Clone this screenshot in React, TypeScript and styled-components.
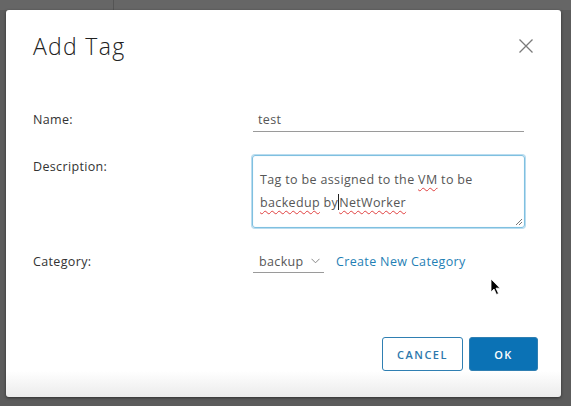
import styled, { createGlobalStyle } from "styled-components";

const GlobalStyle = createGlobalStyle`
  html, body {
    margin: 0;
    padding: 0;
    background: #5e5e5e;
  }
  body {
    font-family: "Open Sans", "Noto Sans", "Liberation Sans", sans-serif;
  }
`;

const Backdrop = styled.div`
  position: relative;
  width: 571px;
  height: 406px;
  overflow: hidden;
  background: #5c5c5c;
  display: flex;
  flex-direction: column;
`;

const BehindStrip = styled.div`
  height: 10px;
  flex: none;
  background: #666666;
  display: flex;
`;

const BehindCell = styled.div<{ $width: number }>`
  width: ${({ $width }) => $width}px;
  border-right: 1px solid #555;
`;

const Dialog = styled.div`
  margin-left: 6px;
  width: 555px;
  height: 387px;
  border-radius: 3px;
  background: linear-gradient(to bottom, #ffffff calc(100% - 26px), #ebebeb 100%);
  box-shadow: 0 1px 3px rgba(0, 0, 0, 0.5);
  display: flex;
  flex-direction: column;
  position: relative;
`;

const Header = styled.div`
  display: flex;
  align-items: center;
  justify-content: space-between;
  padding: 22px 27px 0 27px;
  height: 28px;
`;

const Title = styled.h2`
  margin: 0;
  font-size: 23px;
  font-weight: 300;
  color: #222;
  letter-spacing: 1.3px;
`;

const CloseButton = styled.button`
  all: unset;
  width: 16px;
  height: 16px;
  display: flex;
  cursor: pointer;
`;

const Form = styled.div`
  display: grid;
  grid-template-columns: 220px 1fr;
  padding: 0 37px 0 27px;
  margin-top: 48px;
  letter-spacing: 0.35px;
`;

const Label = styled.div<{ $top?: number }>`
  font-size: 12.5px;
  color: #333;
  padding-top: ${({ $top }) => $top ?? 0}px;
  line-height: 24px;
`;

const Field = styled.div<{ $top?: number }>`
  margin-top: ${({ $top }) => $top ?? 0}px;
`;

const TextInput = styled.div`
  height: 23px;
  border-bottom: 1px solid #9a9a9a;
  font-size: 12.5px;
  line-height: 24px;
  color: #565656;
  padding-left: 5px;
`;

const TextArea = styled.div`
  position: relative;
  box-sizing: border-box;
  height: 73px;
  margin-left: -1px;
  margin-right: -1px;
  border: 1px solid #7fc0e0;
  border-radius: 3px;
  box-shadow: 0 0 0 1px #b9dcef, inset 0 0 1px #b9dcef;
  padding: 12px 7px 0 7px;
  font-size: 12.5px;
  line-height: 23px;
  color: #565656;
`;

const Misspelled = styled.span`
  text-decoration: underline wavy #e04040;
  text-decoration-thickness: 1px;
  text-underline-offset: 3px;
`;

const Caret = styled.span`
  display: inline-block;
  width: 0;
  height: 16px;
  border-left: 1px solid #222;
  vertical-align: -3px;
`;

const ResizeGrip = styled.svg`
  position: absolute;
  right: 1px;
  bottom: 1px;
`;

const CategoryRow = styled.div`
  display: flex;
  align-items: center;
  gap: 12px;
`;

const Select = styled.div`
  box-sizing: border-box;
  width: 71px;
  height: 23px;
  border-bottom: 1px solid #9a9a9a;
  display: flex;
  align-items: center;
  justify-content: space-between;
  padding: 0 4px 0 6px;
  font-size: 12.5px;
  color: #565656;
`;

const Link = styled.a`
  font-size: 12.5px;
  color: #1f7fb5;
  text-decoration: none;
  cursor: pointer;
`;

const Footer = styled.div`
  margin-top: auto;
  display: flex;
  justify-content: flex-end;
  gap: 6px;
  padding: 0 23px 26px 0;
`;

const Button = styled.button<{ $primary?: boolean }>`
  all: unset;
  box-sizing: border-box;
  height: 34px;
  width: ${({ $primary }) => ($primary ? 69 : 81)}px;
  border-radius: 3px;
  border: 1px solid #2f7fb2;
  background: ${({ $primary }) => ($primary ? "#0b72b5" : "#ffffff")};
  color: ${({ $primary }) => ($primary ? "#ffffff" : "#2c78ac")};
  font-size: 11px;
  font-weight: 600;
  letter-spacing: 1.5px;
  display: flex;
  align-items: center;
  justify-content: center;
  cursor: pointer;
`;

const Pointer = styled.svg`
  position: absolute;
  left: 490px;
  top: 278px;
`;

export default function App() {
  return (
    <>
      <GlobalStyle />
      <Backdrop>
        <BehindStrip>
          <BehindCell $width={113} />
        </BehindStrip>
        <Dialog>
          <Header>
            <Title>Add Tag</Title>
            <CloseButton aria-label="Close">
              <svg width="16" height="16" viewBox="0 0 16 16">
                <path d="M1.5 1.5 L14.5 14.5 M14.5 1.5 L1.5 14.5" stroke="#7a7a7a" strokeWidth="1.3" fill="none" />
              </svg>
            </CloseButton>
          </Header>

          <Form>
            <Label>Name:</Label>
            <Field>
              <TextInput>test</TextInput>
            </Field>

            <Label $top={23}>Description:</Label>
            <Field $top={23}>
              <TextArea>
                Tag to be assigned to the <Misspelled>VM</Misspelled> to be
                <br />
                <Misspelled>backedup</Misspelled> by<Caret />
                <Misspelled>NetWorker</Misspelled>
                <ResizeGrip width="8" height="8" viewBox="0 0 8 8">
                  <path d="M7 1 L1 7 M7 4 L4 7" stroke="#777" strokeWidth="1" fill="none" />
                </ResizeGrip>
              </TextArea>
            </Field>

            <Label $top={22}>Category:</Label>
            <Field $top={22}>
              <CategoryRow>
                <Select>
                  backup
                  <svg width="9" height="6" viewBox="0 0 9 6">
                    <path d="M0.5 0.8 L4.5 4.8 L8.5 0.8" stroke="#888" strokeWidth="1" fill="none" />
                  </svg>
                </Select>
                <Link>Create New Category</Link>
              </CategoryRow>
            </Field>
          </Form>

          <Footer>
            <Button>CANCEL</Button>
            <Button $primary>OK</Button>
          </Footer>
        </Dialog>
        <Pointer width="12" height="18" viewBox="0 0 12 18">
          <path d="M1 1 L1 14 L4 11 L6.5 16.5 L8.5 15.5 L6 10.2 L10 10.2 Z" fill="#000" stroke="#fff" strokeWidth="0.8" />
        </Pointer>
      </Backdrop>
    </>
  );
}
